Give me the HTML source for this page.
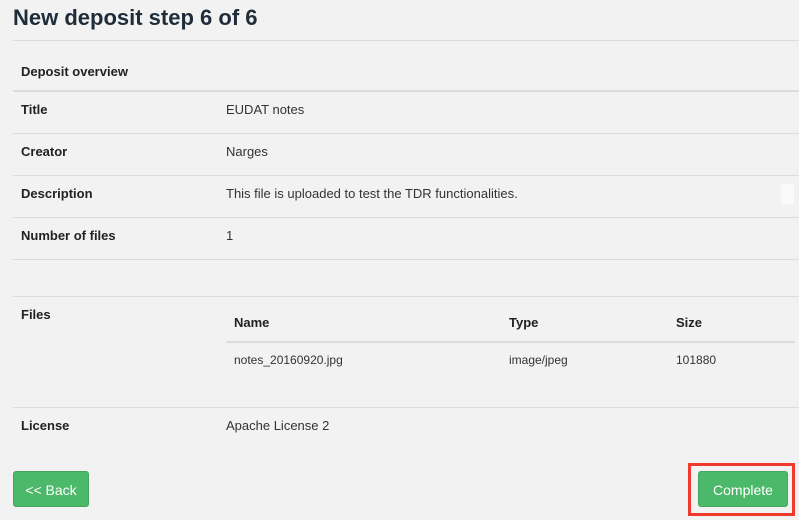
<!DOCTYPE html>
<html><head><style>
body{margin:0;width:799px;height:520px;background:#f2f2f2;font-family:"Liberation Sans",sans-serif;color:#222;position:relative;overflow:hidden}
.a{position:absolute;white-space:nowrap}
.h{font-size:22px;font-weight:bold;color:#1f2d3a;left:13px;top:5px}
.l{position:absolute;left:13px;right:0;height:1px;background:#dcdcdc}
.b{font-weight:bold;font-size:13px}
.t{font-size:13px;color:#333}
.btn{position:absolute;background:#4cb86a;color:#fff;font-size:14px;border-radius:3px;text-align:center;line-height:36px;height:36px;border:1px solid #43a55f;box-sizing:border-box}
</style></head><body>
<div class="a h">New deposit step 6 of 6</div>
<div class="l" style="top:40px;background:#d5dce2"></div>
<div class="a b" style="left:21px;top:64px">Deposit overview</div>
<div class="l" style="top:90px;height:2px"></div>
<div class="a b" style="left:21px;top:102px">Title</div><div class="a t" style="left:226px;top:102px">EUDAT notes</div>
<div class="l" style="top:133px"></div>
<div class="a b" style="left:21px;top:144px">Creator</div><div class="a t" style="left:226px;top:144px">Narges</div>
<div class="l" style="top:175px"></div>
<div class="a b" style="left:21px;top:186px">Description</div><div class="a t" style="left:226px;top:186px">This file is uploaded to test the TDR functionalities.</div>
<div class="a" style="left:781px;top:184px;width:13px;height:20px;background:#fafafa"></div>
<div class="l" style="top:217px"></div>
<div class="a b" style="left:21px;top:228px">Number of files</div><div class="a t" style="left:226px;top:228px">1</div>
<div class="l" style="top:259px"></div>
<div class="l" style="top:296px"></div>
<div class="a b" style="left:21px;top:307px">Files</div>
<div class="a b" style="left:234px;top:315px">Name</div>
<div class="a b" style="left:509px;top:315px">Type</div>
<div class="a b" style="left:676px;top:315px">Size</div>
<div class="l" style="top:341px;left:226px;right:4px;height:2px"></div>
<div class="a t" style="left:234px;top:353px;font-size:12px">notes_20160920.jpg</div>
<div class="a t" style="left:509px;top:353px;font-size:12px">image/jpeg</div>
<div class="a t" style="left:676px;top:353px;font-size:12px">101880</div>
<div class="l" style="top:407px"></div>
<div class="a b" style="left:21px;top:418px">License</div><div class="a t" style="left:226px;top:418px">Apache License 2</div>
<div class="btn" style="left:13px;top:471px;width:76px">&lt;&lt; Back</div>
<div class="a" style="left:688px;top:463px;width:101px;height:47px;border:3px solid #f03a2e"></div>
<div class="btn" style="left:698px;top:471px;width:90px">Complete</div>
</body></html>
